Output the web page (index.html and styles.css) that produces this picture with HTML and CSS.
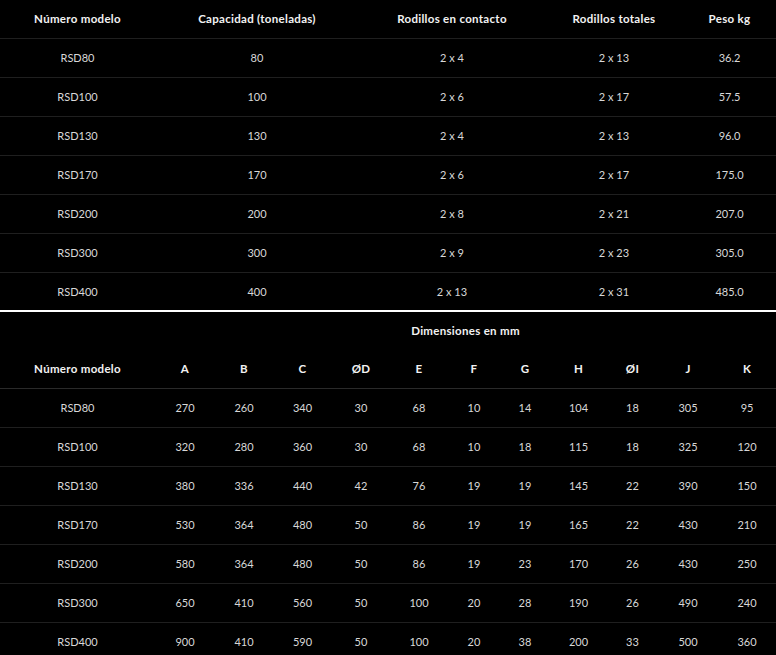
FILE: index.html
```html
<!DOCTYPE html>
<html lang="es">
<head>
<meta charset="utf-8">
<title>RSD</title>
<link rel="stylesheet" href="styles.css">
</head>
<body>
<table class="spec spec-main">
  <colgroup>
    <col class="c-model"><col class="c-cap"><col class="c-contact"><col class="c-total"><col class="c-weight">
  </colgroup>
  <thead>
    <tr class="head"><th>Número modelo</th><th>Capacidad (toneladas)</th><th>Rodillos en contacto</th><th>Rodillos totales</th><th>Peso kg</th></tr>
  </thead>
  <tbody>
    <tr><td>RSD80</td><td>80</td><td>2 x 4</td><td>2 x 13</td><td>36.2</td></tr>
    <tr><td>RSD100</td><td>100</td><td>2 x 6</td><td>2 x 17</td><td>57.5</td></tr>
    <tr><td>RSD130</td><td>130</td><td>2 x 4</td><td>2 x 13</td><td>96.0</td></tr>
    <tr><td>RSD170</td><td>170</td><td>2 x 6</td><td>2 x 17</td><td>175.0</td></tr>
    <tr><td>RSD200</td><td>200</td><td>2 x 8</td><td>2 x 21</td><td>207.0</td></tr>
    <tr><td>RSD300</td><td>300</td><td>2 x 9</td><td>2 x 23</td><td>305.0</td></tr>
    <tr class="last"><td>RSD400</td><td>400</td><td>2 x 13</td><td>2 x 31</td><td>485.0</td></tr>
  </tbody>
</table>
<table class="spec spec-dim">
  <colgroup>
    <col class="d-model"><col class="d-a"><col class="d-b"><col class="d-c"><col class="d-d"><col class="d-e"><col class="d-f"><col class="d-g"><col class="d-h"><col class="d-i"><col class="d-j"><col class="d-k">
  </colgroup>
  <thead>
    <tr class="super"><th></th><th colspan="11">Dimensiones en mm</th></tr>
    <tr class="head"><th>Número modelo</th><th>A</th><th>B</th><th>C</th><th>ØD</th><th>E</th><th>F</th><th>G</th><th>H</th><th>ØI</th><th>J</th><th>K</th></tr>
  </thead>
  <tbody>
    <tr><td>RSD80</td><td>270</td><td>260</td><td>340</td><td>30</td><td>68</td><td>10</td><td>14</td><td>104</td><td>18</td><td>305</td><td>95</td></tr>
    <tr><td>RSD100</td><td>320</td><td>280</td><td>360</td><td>30</td><td>68</td><td>10</td><td>18</td><td>115</td><td>18</td><td>325</td><td>120</td></tr>
    <tr><td>RSD130</td><td>380</td><td>336</td><td>440</td><td>42</td><td>76</td><td>19</td><td>19</td><td>145</td><td>22</td><td>390</td><td>150</td></tr>
    <tr><td>RSD170</td><td>530</td><td>364</td><td>480</td><td>50</td><td>86</td><td>19</td><td>19</td><td>165</td><td>22</td><td>430</td><td>210</td></tr>
    <tr><td>RSD200</td><td>580</td><td>364</td><td>480</td><td>50</td><td>86</td><td>19</td><td>23</td><td>170</td><td>26</td><td>430</td><td>250</td></tr>
    <tr><td>RSD300</td><td>650</td><td>410</td><td>560</td><td>50</td><td>100</td><td>20</td><td>28</td><td>190</td><td>26</td><td>490</td><td>240</td></tr>
    <tr><td>RSD400</td><td>900</td><td>410</td><td>590</td><td>50</td><td>100</td><td>20</td><td>38</td><td>200</td><td>33</td><td>500</td><td>360</td></tr>
  </tbody>
</table>
</body>
</html>
```

FILE: styles.css
```css
html, body {
  margin: 0;
  padding: 0;
  background: #000;
}
body {
  font-family: Lato, "Liberation Sans", sans-serif;
  font-size: 11px;
  color: #d8d8d8;
}
.spec {
  width: 776px;
  border-collapse: collapse;
  table-layout: fixed;
}
.spec th, .spec td {
  padding: 0;
  text-align: center;
  vertical-align: middle;
  white-space: nowrap;
}
.spec th {
  color: #f2f2f2;
  font-weight: 700;
  font-size: 11.5px;
  letter-spacing: 0.3px;
}
.spec tr {
  height: 39px;
  border-bottom: 1px solid #1f1f1f;
}
.spec-main tr.head { height: 38px; }
.spec-main tr.last {
  height: 39px;
  border-bottom: 2px solid #fff;
}
.spec-dim tr.super {
  height: 37px;
  border-bottom: 0;
}
.spec-dim tr.head {
  height: 39px;
  border-bottom: 1px solid #2a2a2a;
}

.c-model { width: 155px; }
.c-cap { width: 204px; }
.c-contact { width: 186px; }
.c-total { width: 138px; }
.c-weight { width: 93px; }

.d-model { width: 155px; }
.d-a { width: 60px; }
.d-b { width: 58px; }
.d-c { width: 59px; }
.d-d { width: 58px; }
.d-e { width: 58px; }
.d-f { width: 52px; }
.d-g { width: 50px; }
.d-h { width: 57px; }
.d-i { width: 51px; }
.d-j { width: 60px; }
.d-k { width: 58px; }
```
